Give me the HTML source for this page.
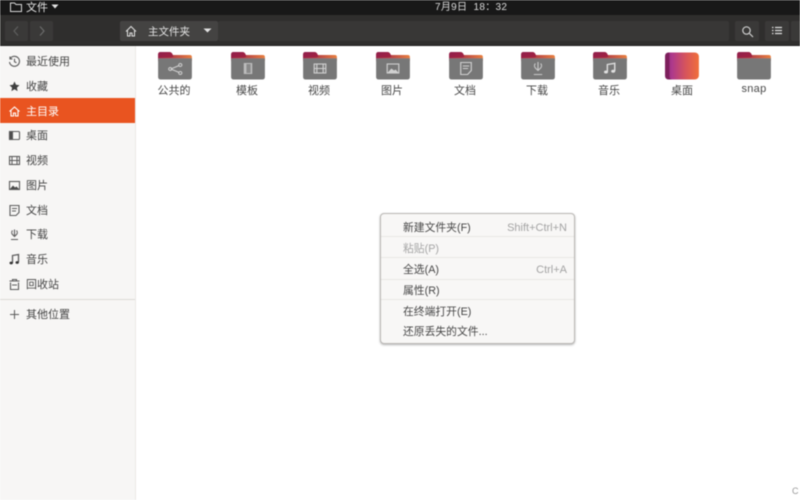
<!DOCTYPE html>
<html lang="zh-CN">
<head>
<meta charset="utf-8">
<title>文件</title>
<style>
html,body{margin:0;padding:0;width:800px;height:500px;overflow:hidden;background:#fff}
body{font-family:"Liberation Sans","Noto Sans CJK SC",sans-serif;position:relative}
#root{position:absolute;left:0;top:0;width:800px;height:500px;overflow:hidden;filter:blur(.5px)}
.abs{position:absolute}
.t{position:absolute;white-space:nowrap;line-height:14px}
#top{left:0;top:0;width:800px;height:15px;background:#181818}
#hdr{left:0;top:15px;width:800px;height:31px;background:#2f2e2d}
.btn{position:absolute;top:21px;height:20px;background:#3a3938;border-radius:2px}
#side{left:0;top:46px;width:135px;height:454px;background:#f7f6f5;border-right:1px solid #ebe9e7}
.row{position:absolute;left:26px;font-size:11px;color:#444;white-space:nowrap;line-height:14px}
.ic{position:absolute;left:8px;width:13px;height:13px;fill:none;stroke:#5c5c5c;stroke-width:1.1}
.lab{position:absolute;width:70px;text-align:center;font-size:11px;color:#474747;line-height:14px}
.fo{position:absolute;top:51px;width:38px;height:30px}
#menu{left:380px;top:213px;width:193px;height:129px;background:#f8f7f6;border:1px solid #b9b7b4;border-radius:4px;box-shadow:0 1px 2px rgba(0,0,0,.3)}
.mi{position:absolute;left:22px;font-size:10.800px;color:#464646;white-space:nowrap;line-height:14px}
.ms{position:absolute;right:7px;font-size:11px;color:#a3a3a3;white-space:nowrap;line-height:14px}
.sep{position:absolute;left:0;width:193px;height:1px;background:#e9e7e5}
</style>
</head>
<body>
<div id="root">
<div id="top" class="abs"></div>
<svg class="abs" style="left:9px;top:1px" width="14" height="12" viewBox="0 0 14 12" fill="none" stroke="#d8d8d8" stroke-width="1"><path d="M1.500 2h4l1.500 1.500h5.500v7h-11z"/></svg>
<div class="t" style="left:26px;top:1px;font-size:11px;color:#e4e4e4">文件</div>
<svg class="abs" style="left:51px;top:4px" width="8" height="5"><path d="M0.500 0.500h7l-3.500 4z" fill="#e4e4e4"/></svg>
<div class="t" style="left:435px;top:1px;font-size:10px;color:#dcdcdc;letter-spacing:.3px">7月9日&nbsp;&nbsp;18：32</div>

<div id="hdr" class="abs"></div>
<div class="btn" style="left:5px;width:23px"></div>
<div class="btn" style="left:30px;width:23px"></div>
<svg class="abs" style="left:11px;top:25px" width="10" height="12" fill="none" stroke="#5e5e5e" stroke-width="1.200"><path d="M7 1.500L3 6l4 4.500"/></svg>
<svg class="abs" style="left:37px;top:25px" width="10" height="12" fill="none" stroke="#6b6b6b" stroke-width="1.200"><path d="M3 1.500L7 6l-4 4.500"/></svg>
<div class="btn" style="left:120px;width:98px;background:#444342"></div>
<div class="btn" style="left:218px;width:511px;background:#383736"></div>
<svg class="abs" style="left:125px;top:25px" width="12" height="12" fill="none" stroke="#e0e0e0" stroke-width="1"><path d="M1 6.500L6 1.500l5 5M2.500 5.500v5.500h2.500V8h2v3h2.500V5.500"/></svg>
<div class="t" style="left:148px;top:25px;font-size:10.500px;color:#e2e2e2">主文件夹</div>
<svg class="abs" style="left:203px;top:28px" width="9" height="5"><path d="M.5.500h8L4.500 4.500z" fill="#e2e2e2"/></svg>
<div class="btn" style="left:735px;width:24px"></div>
<svg class="abs" style="left:741px;top:25px" width="13" height="13" fill="none" stroke="#d0d0d0" stroke-width="1.200"><circle cx="5.500" cy="5.500" r="3.700"/><path d="M8.500 8.500L12 12"/></svg>
<div class="btn" style="left:765px;width:24px"></div>
<svg class="abs" style="left:771px;top:25px" width="12" height="12" fill="none" stroke="#e0e0e0" stroke-width="1.200"><path d="M4 2.500h7M4 5.500h7M4 8.500h7M1 2.500h1.500M1 5.500h1.500M1 8.500h1.500"/></svg>
<div class="btn" style="left:791px;width:12px"></div>
<div class="abs" style="left:0;top:45px;width:800px;height:1px;background:#1f1f1f"></div>

<div id="side" class="abs"></div>
<div class="abs" style="left:0;top:98px;width:135px;height:25px;background:#e95420"></div>

<svg class="ic" style="top:55px" viewBox="0 0 13 13"><path d="M2 4a5 5 0 1 1-.500 3M2 1.500V4h2.500M6.500 3.800v3l2 1"/></svg>
<div class="row" style="top:55px">最近使用</div>
<svg class="ic" style="top:80px" viewBox="0 0 13 13"><path d="M6.500 1.500l1.500 3.300 3.500.400-2.600 2.400.700 3.500-3.100-1.800-3.100 1.800.700-3.500-2.600-2.400 3.500-.400z" fill="#3f3f3f" stroke="none"/></svg>
<div class="row" style="top:80px">收藏</div>
<svg class="ic" style="top:105px;stroke:#fff" viewBox="0 0 13 13"><path d="M1.500 6.500L6.500 2l5 4.500M3 5.500V11h2.500V8h2v3H10V5.500"/></svg>
<div class="row" style="top:105px;color:#fff">主目录</div>
<svg class="ic" style="top:129px" viewBox="0 0 13 13"><rect x="1.500" y="2.500" width="10" height="8" rx="1"/><rect x="1.500" y="2.500" width="3" height="8" fill="#4a4a4a"/></svg>
<div class="row" style="top:129px">桌面</div>
<svg class="ic" style="top:154px" viewBox="0 0 13 13"><rect x="1.500" y="2.500" width="10" height="8"/><path d="M1.500 6.500h10M4 2.500v8M9 2.500v8" stroke-width="1"/></svg>
<div class="row" style="top:154px">视频</div>
<svg class="ic" style="top:179px" viewBox="0 0 13 13"><rect x="1.500" y="2.500" width="10" height="8"/><path d="M2 10l3-3.500 2 2 1.500-1 2.500 2.500z" fill="#4a4a4a" stroke="none"/></svg>
<div class="row" style="top:179px">图片</div>
<svg class="ic" style="top:204px" viewBox="0 0 13 13"><path d="M2 1.500h9v7l-3 3H2zM4 4.500h5M4 7h4"/></svg>
<div class="row" style="top:204px">文档</div>
<svg class="ic" style="top:228px" viewBox="0 0 13 13"><path d="M6.500 1.500v6M4.500 2.500a3 3 0 0 0 0 4l2 2 2-2a3 3 0 0 0 0-4M3 11.500h7"/></svg>
<div class="row" style="top:228px">下载</div>
<svg class="ic" style="top:253px" viewBox="0 0 13 13"><path d="M4.500 10V2.500l6-1v7.500" stroke-width="1.300"/><ellipse cx="3.200" cy="10" rx="1.700" ry="1.400" fill="#333" stroke="none"/><ellipse cx="9.200" cy="9.500" rx="1.700" ry="1.400" fill="#333" stroke="none"/></svg>
<div class="row" style="top:253px">音乐</div>
<svg class="ic" style="top:278px" viewBox="0 0 13 13"><path d="M2.500 4.500v7h8v-7M1.500 3h10M4.500 3V1.500h4V3M4 7h5"/></svg>
<div class="row" style="top:278px">回收站</div>
<div class="abs" style="left:0;top:299px;width:135px;height:1px;background:#dcdad7"></div>
<svg class="ic" style="top:308px" viewBox="0 0 13 13"><path d="M6.500 2v9M2 6.500h9" stroke-width="1"/></svg>
<div class="row" style="top:308px">其他位置</div>

<svg width="0" height="0" style="position:absolute">
<defs>
<linearGradient id="tp" x1="0" x2="1" y1="0" y2="0"><stop offset="0" stop-color="#a3243f"/><stop offset=".5" stop-color="#bd4a45"/><stop offset="1" stop-color="#e9803f"/></linearGradient>
<linearGradient id="dk" x1="0" y1="0" x2="1" y2="1"><stop offset="0" stop-color="#8f1f4d"/><stop offset="1" stop-color="#a8233f"/></linearGradient>
<linearGradient id="dt" x1="0" x2="1" y1="0" y2="0"><stop offset="0" stop-color="#8a2472"/><stop offset=".2" stop-color="#ad3a8c"/><stop offset=".6" stop-color="#d6545c"/><stop offset="1" stop-color="#f0703a"/></linearGradient>
<g id="fd">
<path d="M2 8V3.500Q2 1 4.500 1h8q2 0 3 2l.500 1h16q2 0 2 2v4H2z" fill="url(#tp)"/>
<path d="M2 8V3.500Q2 1 4.500 1h8q2 0 3 2l1 2.500q-1 1-3 1H4Q2.500 6.500 2 8z" fill="url(#dk)"/>
<path d="M2 7.500h32V26q0 2.500-2.500 2.500h-27Q2 28.500 2 26z" fill="#777"/>
<path d="M2 7.500h32" stroke="#8a7f88" stroke-width=".6"/>
</g>
</defs>
</svg>

<svg class="fo" preserveAspectRatio="none" style="left:156px" viewBox="0 0 36 30"><use href="#fd"/><g fill="none" stroke="#cfcfcf" stroke-width="1"><path d="M14 18l8-3.500M14 18l8 3.500"/><circle cx="13.500" cy="18" r="1.500"/><circle cx="23" cy="14" r="1.500"/><circle cx="23" cy="22" r="1.500"/></g></svg>
<svg class="fo" preserveAspectRatio="none" style="left:229px" viewBox="0 0 36 30"><use href="#fd"/><rect x="14" y="12" width="8" height="11" fill="#bdbdbd"/><rect x="16.500" y="13" width="4" height="9" fill="#8a8a8a"/></svg>
<svg class="fo" preserveAspectRatio="none" style="left:301px" viewBox="0 0 36 30"><use href="#fd"/><g fill="none" stroke="#d0d0d0" stroke-width="1.100"><rect x="12.500" y="13" width="11" height="9"/><path d="M12.500 17.500h11M15 13v9M21 13v9"/></g></svg>
<svg class="fo" preserveAspectRatio="none" style="left:374px" viewBox="0 0 36 30"><use href="#fd"/><rect x="12.500" y="13" width="11" height="9" fill="none" stroke="#d0d0d0" stroke-width="1.100"/><path d="M13 21.500l3.500-4 2.500 2 1.500-1 2.500 3z" fill="#d0d0d0"/></svg>
<svg class="fo" preserveAspectRatio="none" style="left:447px" viewBox="0 0 36 30"><use href="#fd"/><path d="M13 11.500h10v8l-3.500 4H13z" fill="none" stroke="#d0d0d0" stroke-width="1.100"/><path d="M15 15h6M15 17.500h5" stroke="#d0d0d0"/></svg>
<svg class="fo" preserveAspectRatio="none" style="left:519px" viewBox="0 0 36 30"><use href="#fd"/><g fill="none" stroke="#c8c8c8" stroke-width="1.100"><path d="M18 11v8M15.500 12.500a3.500 3.500 0 0 0 0 4.500l2.500 2.500 2.500-2.500a3.500 3.500 0 0 0 0-4.500M14 23.500h8"/></g></svg>
<svg class="fo" preserveAspectRatio="none" style="left:591px" viewBox="0 0 36 30"><use href="#fd"/><path d="M15.500 21V13.500l7-1.200V20" fill="none" stroke="#e0e0e0" stroke-width="1.300"/><ellipse cx="14.200" cy="21" rx="1.900" ry="1.500" fill="#e0e0e0"/><ellipse cx="21" cy="20.300" rx="1.900" ry="1.500" fill="#e0e0e0"/></svg>
<svg class="fo" preserveAspectRatio="none" style="left:663px" viewBox="0 0 36 30"><rect x="2" y="1.500" width="32" height="27" rx="4" fill="url(#dt)"/><path d="M6 1.500H5.500Q2 1.500 2 5v20q0 3.500 3.500 3.500H9Q6 28.500 6 25z" fill="#7d1f5c"/></svg>
<svg class="fo" preserveAspectRatio="none" style="left:735px" viewBox="0 0 36 30"><use href="#fd"/></svg>

<div class="lab" style="left:139px;top:84px">公共的</div>
<div class="lab" style="left:212px;top:84px">模板</div>
<div class="lab" style="left:284px;top:84px">视频</div>
<div class="lab" style="left:357px;top:84px">图片</div>
<div class="lab" style="left:430px;top:84px">文档</div>
<div class="lab" style="left:502px;top:84px">下载</div>
<div class="lab" style="left:574px;top:84px">音乐</div>
<div class="lab" style="left:647px;top:84px">桌面</div>
<div class="lab" style="left:719px;top:82px;letter-spacing:.3px">snap</div>

<div id="menu" class="abs">
<div class="mi" style="top:7px">新建文件夹(F)</div><div class="ms" style="top:7px">Shift+Ctrl+N</div>
<div class="sep" style="top:22px"></div>
<div class="mi" style="top:28px;color:#a5a5a5">粘贴(P)</div>
<div class="sep" style="top:43px"></div>
<div class="mi" style="top:49px">全选(A)</div><div class="ms" style="top:49px">Ctrl+A</div>
<div class="sep" style="top:65px"></div>
<div class="mi" style="top:70px">属性(R)</div>
<div class="sep" style="top:85px"></div>
<div class="mi" style="top:91px">在终端打开(E)</div>
<div class="mi" style="top:111px">还原丢失的文件...</div>
</div>

<div class="t" style="left:792px;top:484px;font-size:9px;color:#9a9a9a">C</div>
</div>
</body>
</html>
